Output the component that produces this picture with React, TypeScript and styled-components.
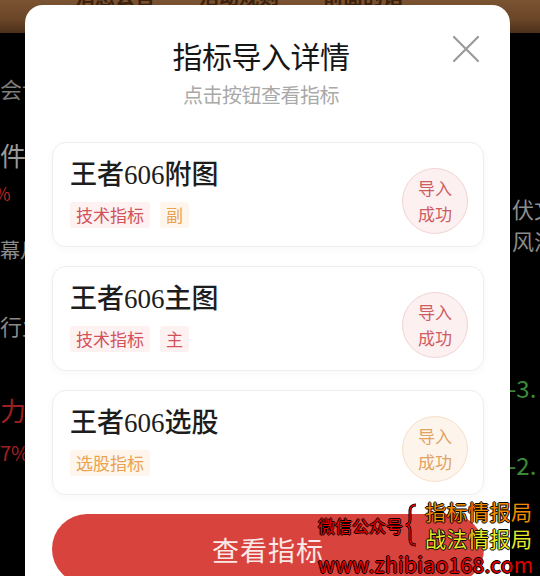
import React from "react";
import styled, { createGlobalStyle } from "styled-components";

const Global = createGlobalStyle`
  html, body { margin: 0; padding: 0; background: #000; }
  body { font-family: "Noto Sans CJK SC", "Noto Sans", sans-serif; }
  * { box-sizing: border-box; }
`;

const Screen = styled.div`
  position: relative;
  width: 540px;
  height: 576px;
  overflow: hidden;
  background: #000;
  display: flex;
  flex-direction: column;
`;

const TopBand = styled.div`
  height: 33px;
  flex: none;
  display: flex;
  gap: 44px;
  padding-left: 75px;
  overflow: hidden;
  background: linear-gradient(180deg, #7a5332 0%, #6a4527 60%, #4b3019 100%);
`;

const BandText = styled.span`
  font-size: 20px;
  line-height: 20px;
  margin-top: -13px;
  color: #3c210c;
  font-weight: 700;
`;

const Main = styled.div`
  flex: 1;
  display: flex;
  justify-content: space-between;
`;

const SideCol = styled.div<{ $w: number }>`
  width: ${(p) => p.$w}px;
  overflow: hidden;
  display: flex;
  flex-direction: column;
  white-space: nowrap;
`;

const BgText = styled.span<{ $mt: number; $size: number; $color?: string; $indent?: number }>`
  display: block;
  margin-top: ${(p) => p.$mt}px;
  margin-left: ${(p) => p.$indent ?? 0}px;
  font-size: ${(p) => p.$size}px;
  line-height: ${(p) => p.$size}px;
  color: ${(p) => p.$color ?? "#858585"};
`;

const Modal = styled.div`
  position: absolute;
  top: 5px;
  left: 25px;
  width: 485px;
  height: 640px;
  background: #fff;
  border-radius: 18px;
  padding: 32px 26px 0 27px;
  display: flex;
  flex-direction: column;
  align-items: center;
`;

const Close = styled.button`
  position: absolute;
  top: 30px;
  left: 427px;
  width: 28px;
  height: 28px;
  padding: 0;
  border: none;
  background: transparent;
  display: flex;
`;

const Title = styled.h1`
  margin: 0 14px 0 0;
  font-size: 30px;
  line-height: 36px;
  font-weight: 400;
  color: #161616;
  letter-spacing: -0.5px;
`;

const Subtitle = styled.p`
  margin: 9px 14px 0 0;
  font-size: 20px;
  line-height: 26px;
  color: #a9a9a9;
  letter-spacing: -0.5px;
`;

const List = styled.div`
  margin-top: 34px;
  width: 100%;
  display: flex;
  flex-direction: column;
  gap: 19px;
`;

const Card = styled.div`
  height: 105px;
  border: 1px solid #eeeeee;
  border-radius: 14px;
  box-shadow: 0 2px 8px rgba(0, 0, 0, 0.035);
  padding: 15px 15px 0 17px;
  display: flex;
  justify-content: space-between;
`;

const CardInfo = styled.div`
  display: flex;
  flex-direction: column;
  gap: 10px;
`;

const CardTitle = styled.div`
  font-family: "Liberation Serif", "Noto Sans CJK SC", serif;
  font-size: 27px;
  line-height: 34px;
  font-weight: 500;
  color: #1d1d1d;
`;

const Tags = styled.div`
  display: flex;
  gap: 10px;
`;

const Tag = styled.span<{ $tone: "red" | "orange" }>`
  height: 26px;
  padding: 0 6px;
  border-radius: 3px;
  font-size: 17px;
  line-height: 26px;
  color: ${(p) => (p.$tone === "red" ? "#d2525a" : "#eaa250")};
  background: ${(p) => (p.$tone === "red" ? "#fdf1f1" : "#fef6ec")};
`;

const Badge = styled.div<{ $tone: "red" | "orange" }>`
  margin-top: 10px;
  width: 66px;
  height: 66px;
  border-radius: 50%;
  border: 1px solid ${(p) => (p.$tone === "red" ? "#f1d3d5" : "#f5dfc8")};
  background: ${(p) => (p.$tone === "red" ? "#fcf0f1" : "#fdf5ec")};
  color: ${(p) => (p.$tone === "red" ? "#cf5c62" : "#e2a262")};
  font-size: 17px;
  line-height: 26px;
  display: flex;
  flex-direction: column;
  align-items: center;
  justify-content: center;
`;

const Primary = styled.button`
  margin-top: 19px;
  width: 432px;
  height: 70px;
  flex: none;
  border: none;
  border-radius: 35px;
  background: #d8433d;
  color: #fbe8e7;
  font-family: "Noto Sans CJK SC", sans-serif;
  font-size: 27px;
  letter-spacing: 1px;
`;

const Watermark = styled.div`
  position: absolute;
  left: 318px;
  top: 500px;
  display: grid;
  grid-template-columns: auto auto auto;
  align-items: center;
  font-family: "Noto Sans CJK SC", sans-serif;
  text-shadow: 1px 0 0 #000, -1px 0 0 #000, 0 1px 0 #000, 0 -1px 0 #000;
`;

const WmLabel = styled.span`
  font-size: 17px;
  line-height: 20px;
  color: #e80000;
  margin-top: 2px;
`;

const WmStack = styled.div`
  display: flex;
  flex-direction: column;
  gap: 4px;
  margin-left: 4px;
`;

const WmLine = styled.span<{ $color: string }>`
  font-size: 21px;
  line-height: 23px;
  color: ${(p) => p.$color};
  letter-spacing: 0.5px;
`;

const WmUrl = styled.span`
  grid-column: 1 / 4;
  margin-top: 3px;
  font-size: 21px;
  line-height: 22px;
  color: #e00000;
  letter-spacing: 0.3px;
`;

type Item = { name: string; tags: { t: string; tone: "red" | "orange" }[]; tone: "red" | "orange" };

const items: Item[] = [
  { name: "王者606附图", tags: [{ t: "技术指标", tone: "red" }, { t: "副", tone: "orange" }], tone: "red" },
  { name: "王者606主图", tags: [{ t: "技术指标", tone: "red" }, { t: "主", tone: "red" }], tone: "red" },
  { name: "王者606选股", tags: [{ t: "选股指标", tone: "orange" }], tone: "orange" },
];

export default function App() {
  return (
    <Screen>
      <Global />
      <TopBand>
        <BandText>消息公告</BandText>
        <BandText>活动规则</BandText>
        <BandText>前面的话</BandText>
      </TopBand>
      <Main>
        <SideCol $w={25}>
          <BgText $mt={44} $size={22} $color="#7d7d7d">会议</BgText>
          <BgText $mt={43} $size={26} $color="#9a9a9a">件</BgText>
          <BgText $mt={16} $size={18} $color="#b22a2a" $indent={-6}>%</BgText>
          <BgText $mt={38} $size={20} $color="#8a8a8a">幕月</BgText>
          <BgText $mt={54} $size={22} $color="#8a8a8a">行业</BgText>
          <BgText $mt={61} $size={26} $color="#9e1f1f">力</BgText>
          <BgText $mt={20} $size={20} $color="#a11f22">7%</BgText>
        </SideCol>
        <SideCol $w={30}>
          <BgText $mt={164} $size={22} $color="#8c8c8c" $indent={2}>伏文</BgText>
          <BgText $mt={10} $size={22} $color="#8c8c8c" $indent={2}>风浪</BgText>
          <BgText $mt={125} $size={24} $color="#3b8a3a" $indent={-2}>-3.</BgText>
          <BgText $mt={53} $size={24} $color="#3b8a3a" $indent={-2}>-2.</BgText>
        </SideCol>
      </Main>
      <Modal>
        <Close aria-label="关闭">
          <svg width="28" height="28" viewBox="0 0 28 28">
            <path d="M2 2 L26 26 M26 2 L2 26" stroke="#9a9a9a" strokeWidth="2.2" strokeLinecap="round" />
          </svg>
        </Close>
        <Title>指标导入详情</Title>
        <Subtitle>点击按钮查看指标</Subtitle>
        <List>
          {items.map((it) => (
            <Card key={it.name}>
              <CardInfo>
                <CardTitle>{it.name}</CardTitle>
                <Tags>
                  {it.tags.map((tg) => (
                    <Tag key={tg.t} $tone={tg.tone}>{tg.t}</Tag>
                  ))}
                </Tags>
              </CardInfo>
              <Badge $tone={it.tone}>
                <span>导入</span>
                <span>成功</span>
              </Badge>
            </Card>
          ))}
        </List>
        <Primary>查看指标</Primary>
      </Modal>
      <Watermark>
        <WmLabel>微信公众号</WmLabel>
        <svg width="16" height="44" viewBox="0 0 16 44">
          <path d="M12 2 Q6 2 6 8 V17 Q6 21 2 22 Q6 23 6 27 V36 Q6 42 12 42" fill="none" stroke="#000" strokeWidth="3" />
          <path d="M12 2 Q6 2 6 8 V17 Q6 21 2 22 Q6 23 6 27 V36 Q6 42 12 42" fill="none" stroke="#e80000" strokeWidth="1.4" />
        </svg>
        <WmStack>
          <WmLine $color="#f08a00">指标情报局</WmLine>
          <WmLine $color="#e6e82a">战法情报局</WmLine>
        </WmStack>
        <WmUrl>www.zhibiao168.com</WmUrl>
      </Watermark>
    </Screen>
  );
}
